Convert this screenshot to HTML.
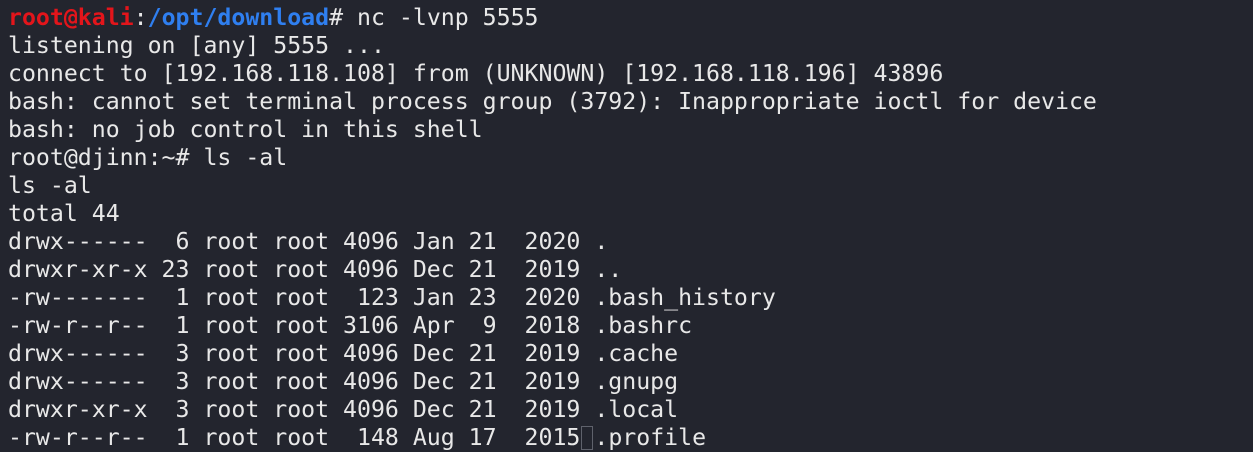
<!DOCTYPE html>
<html><head><style>
html,body{margin:0;padding:0;background:#23252e;width:1253px;height:450px;overflow:hidden}
pre{margin:0;position:absolute;left:8px;top:4px;font-family:"DejaVu Sans Mono","Liberation Mono",monospace;font-size:23.2px;line-height:28px;color:#e8e8e8;white-space:pre}
.r{color:#e3151b;font-weight:bold}.b{color:#2f7ff0;font-weight:bold}
.c{display:inline-block;width:12px;height:24px;border:1px solid #5f626c;margin:0 1px;vertical-align:-5px;box-sizing:border-box}
</style></head><body>
<pre><span class="r">root@kali</span>:<span class="b">/opt/download</span># nc -lvnp 5555
listening on [any] 5555 ...
connect to [192.168.118.108] from (UNKNOWN) [192.168.118.196] 43896
bash: cannot set terminal process group (3792): Inappropriate ioctl for device
bash: no job control in this shell
root@djinn:~# ls -al
ls -al
total 44
drwx------  6 root root 4096 Jan 21  2020 .
drwxr-xr-x 23 root root 4096 Dec 21  2019 ..
-rw-------  1 root root  123 Jan 23  2020 .bash_history
-rw-r--r--  1 root root 3106 Apr  9  2018 .bashrc
drwx------  3 root root 4096 Dec 21  2019 .cache
drwx------  3 root root 4096 Dec 21  2019 .gnupg
drwxr-xr-x  3 root root 4096 Dec 21  2019 .local
-rw-r--r--  1 root root  148 Aug 17  2015<span class="c"></span>.profile</pre>
</body></html>
